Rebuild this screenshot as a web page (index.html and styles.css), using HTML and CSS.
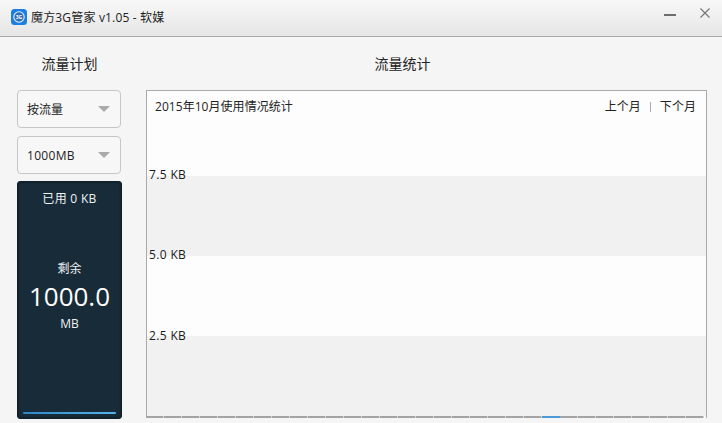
FILE: index.html
```html
<!DOCTYPE html>
<html lang="zh-CN">
<head>
<meta charset="utf-8">
<title>魔方3G管家</title>
<link rel="stylesheet" href="styles.css">
</head>
<body>
<div class="app">
  <header class="titlebar">
    <svg class="logo" width="16" height="16" viewBox="0 0 16 16">
      <rect width="16" height="16" rx="3.5" fill="#1a7fe0"/>
      <circle cx="8" cy="8" r="5.2" fill="#2f6fb5" stroke="#e6f2fc" stroke-width="1.1"/>
      <text x="8" y="10" text-anchor="middle" class="logotext">3G</text>
    </svg>
    <span class="apptitle">魔方3G管家 v1.05 - 软媒</span>
    <div class="winbtns">
      <svg class="minbtn" width="12" height="2" viewBox="0 0 12 2"><path d="M0 1h12" stroke="#6e6e6e" stroke-width="2"/></svg>
      <svg class="closebtn" width="10" height="10" viewBox="0 0 10 10"><path d="M.5.5l9 9M9.500.5l-9 9" stroke="#777" stroke-width="1.2"/></svg>
    </div>
  </header>
  <main class="content">
    <aside class="side">
      <h2 class="heading">流量计划</h2>
      <div class="select"><span>按流量</span><i class="caret"></i></div>
      <div class="select"><span class="wide">1000MB</span><i class="caret"></i></div>
      <div class="panel">
        <div class="used">已用 0 KB</div>
        <div class="remain">剩余</div>
        <div class="big">1000.0</div>
        <div class="unit">MB</div>
        <div class="bar"></div>
      </div>
    </aside>
    <section class="stats">
      <h2 class="heading statshead">流量统计</h2>
      <div class="chart">
        <div class="charthead">
          <span>2015年10月使用情况统计</span>
          <div class="nav"><span>上个月</span><b class="sep"></b><span>下个月</span></div>
        </div>
        <div class="band gray"><span class="lbl">7.5 KB</span></div>
        <div class="band white"><span class="lbl">5.0 KB</span></div>
        <div class="band gray"><span class="lbl last">2.5 KB</span></div>
        <div class="axis"><i></i><i></i><i></i><i></i><i></i><i></i><i></i><i></i><i></i><i></i><i></i><i></i><i></i><i></i><i></i><i></i><i></i><i></i><i></i><i></i><i></i><i></i><i class="today"></i><i></i><i></i><i></i><i></i><i></i><i></i><i></i><i></i></div>
      </div>
    </section>
  </main>
</div>
</body>
</html>
```
FILE: styles.css
```css
* { box-sizing: border-box; }
html, body { margin: 0; padding: 0; }
body {
  width: 722px; height: 423px; overflow: hidden;
  background: #f5f5f5; color: #222;
  font-family: "Open Sans", "Noto Sans CJK SC", sans-serif;
  font-size: 12px;
}
.app { height: 423px; display: flex; flex-direction: column; }
.titlebar {
  height: 37px; flex: none; display: flex; align-items: center;
  padding: 0 12px 3px 11px;
  background: linear-gradient(#f8f8f8, #e6e6e6);
  border-bottom: 1px solid #a9a9a9;
}
.logo { flex: none; margin-right: 4px; }
.logotext { font-size: 5px; font-weight: 700; fill: #fff; font-family: "Open Sans", sans-serif; }
.apptitle { font-size: 12px; color: #222; letter-spacing: .17px; }
.winbtns { margin-left: auto; display: flex; align-items: flex-start; gap: 24px; }
.winbtns svg { display: block; }
.minbtn { margin-top: -2px; }
.closebtn { margin-top: -8px; }
.content { flex: 1; display: flex; padding: 0 15px 0 17px; gap: 24px; min-height: 0; }
.side { width: 105px; flex: none; display: flex; flex-direction: column; }
.heading {
  margin: 0; height: 53px; padding-top: 17px;
  font-size: 14px; font-weight: 400; line-height: 20px; text-align: center; color: #222;
}
.statshead { padding-right: 48px; }
.select {
  width: 104px; height: 38px; margin-bottom: 8px; padding: 0 10px 0 9px;
  display: flex; align-items: center; justify-content: space-between;
  background: #f7f7f7; border: 1px solid #c6c6c6; border-radius: 4px;
}
.wide { letter-spacing: .3px; }
.caret { width: 0; height: 0; border-left: 6px solid transparent; border-right: 6px solid transparent; border-top: 6px solid #aaa; }
.panel {
  margin-top: -1px; height: 238px; display: flex; flex-direction: column; align-items: center;
  background: #182b38; border: 1px solid #101e28; border-radius: 3px; color: #eef2f4;
  padding: 8px 5px 4px; box-shadow: inset 0 0 3px #0e1a22;
}
.used { line-height: 18px; letter-spacing: .3px; }
.remain { margin-top: 52px; line-height: 18px; }
.big { font-size: 26px; line-height: 36px; color: #fff; }
.unit { line-height: 18px; margin-top: 1px; }
.bar { margin-top: auto; width: 93px; height: 2px; background: linear-gradient(90deg, #2f86c8, #57b4ea); border-radius: 1px; }
.stats { width: 561px; flex: none; display: flex; flex-direction: column; }
.chart {
  height: 328px; display: flex; flex-direction: column; position: relative;
  background: #fdfdfd; border: 1px solid #aaa; border-bottom: 0;
}
.charthead { height: 85px; flex: none; padding: 7px 10px 0 8px; display: flex; justify-content: space-between; line-height: 18px; letter-spacing: .05px; }
.nav { display: flex; align-items: center; height: 18px; }
.sep { width: 1px; height: 10px; background: #aab; margin: 0 9px; }
.band { height: 80px; flex: none; }
.gray { background: #f1f1f1; }
.white { background: #fdfdfd; }
.lbl { position: relative; top: -10px; left: 2px; display: block; line-height: 18px; letter-spacing: .35px; color: #1a1a1a; }
.last { top: -9px; }
.axis { height: 2px; flex: none; display: flex; gap: 0; margin-left: -1px; width: 561px; }
.axis i { width: 18px; flex: none; background: #a4a4a4; border-right: 1px solid #d0d0d0; }
.axis .today { background: #4a9ad8; border-right: 0; }
```
